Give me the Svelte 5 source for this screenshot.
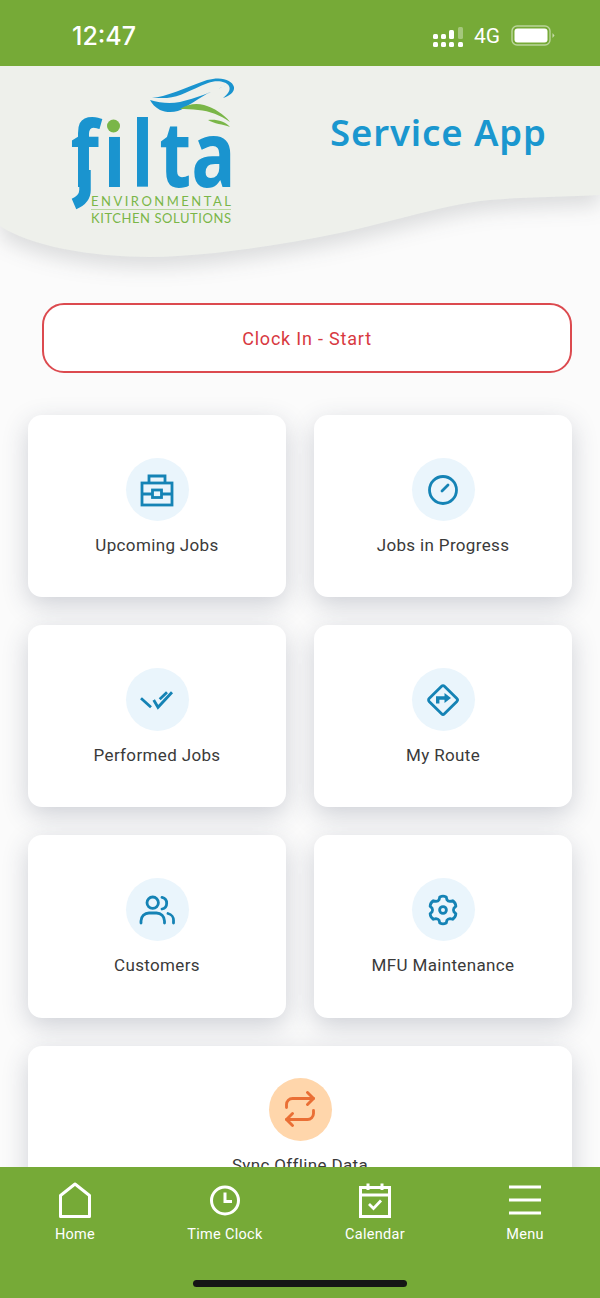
<script lang="ts">
  const tiles = [
    { label: 'Upcoming Jobs', icon: 'case' },
    { label: 'Jobs in Progress', icon: 'gauge' },
    { label: 'Performed Jobs', icon: 'checks' },
    { label: 'My Route', icon: 'route' },
    { label: 'Customers', icon: 'users' },
    { label: 'MFU Maintenance', icon: 'gear' }
  ];

  // six squarish teeth round the centre of a 32 box
  function gearPath() {
    const p = (r: number, t: number) =>
      `${(16 + r * Math.cos(t)).toFixed(2)} ${(16 + r * Math.sin(t)).toFixed(2)}`;
    let d = '';
    for (let i = 0; i < 6; i++) {
      const a = ((i * 60 - 90) * Math.PI) / 180;
      const b = a + Math.PI / 6;
      const next = a + Math.PI / 3;
      d += `${i === 0 ? 'M' : 'L'}${p(13.4, a - 0.24)} Q${p(14.6, a)} ${p(13.4, a + 0.24)} `;
      d += `L${p(11, b - 0.16)} Q${p(10, b)} ${p(11, b + 0.16)} L${p(13.4, next - 0.24)} `;
    }
    return d + 'Z';
  }
</script>

<div class="phone">
  <div class="status">
    <span class="time">12:47</span>
    <div class="status-right">
      <svg class="signal" width="32" height="22" viewBox="0 0 32 22" fill="#fff">
        <rect x="1" y="9" width="5" height="5" rx="1.5" />
        <rect x="9" y="9" width="5" height="5" rx="1.5" />
        <rect x="17" y="5" width="5" height="9" rx="1.5" />
        <rect x="26" y="2" width="5" height="12" rx="1.5" opacity="0.35" />
        <rect x="1" y="17" width="5" height="5" rx="1.5" />
        <rect x="9" y="17" width="5" height="5" rx="1.5" />
        <rect x="17" y="17" width="5" height="5" rx="1.5" />
        <rect x="26" y="17" width="5" height="5" rx="1.5" />
      </svg>
      <span class="net">4G</span>
      <svg class="battery" width="44" height="22" viewBox="0 0 44 22">
        <rect x="1" y="1" width="38" height="19" rx="5" fill="none" stroke="#fff" stroke-opacity="0.5" stroke-width="1.4" />
        <rect x="3.5" y="3.5" width="33" height="14" rx="3" fill="#fff" />
        <path d="M41.5 8l2 2.5-2 2.5z" fill="#fff" fill-opacity="0.6" />
      </svg>
    </div>
  </div>

  <header class="brand">
    <svg class="wave" viewBox="0 0 600 192" preserveAspectRatio="none">
      <path d="M0 0H600V129C560 131 520 131 490 134C440 139 380 160 320 171C260 182 200 191 150 191C90 191 30 180 0 160Z" />
    </svg>
    <svg class="logo" width="170" height="152" viewBox="66 76 170 152">
      <path d="M152 98C165 97 185 88 207 80C222 76 232 80 234 87C235 92 229 96 223 98C228 94 231 90 229 86C226 81 216 80 208 83C190 90 180 97 167 98Z" fill="#1a94cf" />
      <path d="M150 100C160 103 170 104 180 102C196 98 212 92 227 85C218 89 210 92 205 95C197 100 190 104 184 108C178 113 166 113 160 110C155 107 152 104 150 100Z" fill="#1a94cf" />
      <path d="M180 109C188 104 196 103 204 105C214 108 224 114 230 122C220 115 210 111 198 110C192 109 186 109 180 109Z" fill="#7ab648" />
      <path d="M208 120C216 119 225 121 230 127C223 124 214 124 208 120Z" fill="#7ab648" />
      <text class="filta" transform="scale(0.8 1)" y="187" x="88 129 164 199 239">fılta</text>
      <circle cx="113.5" cy="126" r="6.5" fill="#7ab648" />
      <path d="M85 170V190C85 197 81 201 74 204" fill="none" stroke="#1a94cf" stroke-width="11.5" />
      <text class="small" x="91" y="206" textLength="140">ENVIRONMENTAL</text>
      <line x1="91" x2="231" y1="209.5" y2="209.5" stroke="#b9d79c" />
      <text class="small" x="91" y="223" textLength="140">KITCHEN SOLUTIONS</text>
    </svg>
    <h1>Service App</h1>
  </header>

  <main>
    <button class="clock">Clock In - Start</button>
    <div class="grid">
      {#each tiles as tile}
        <div class="tile">
          <div class="disc">
            <svg width="36" height="36" viewBox="-2 -2 36 36" fill="none" stroke="#1583b5" stroke-width="2.8">
              {#if tile.icon === 'case'}
                <rect x="1" y="9" width="30" height="22" />
                <path d="M8 9V2H24V9M1 20H11M21 20H31" />
                <rect x="11.5" y="16" width="9" height="7.5" />
              {:else if tile.icon === 'gauge'}
                <circle cx="16" cy="16" r="13.5" />
                <path d="M15 17L21 11" stroke-linecap="round" />
              {:else if tile.icon === 'checks'}
                <path d="M0 14.3L10 23.3M12.7 16L17 23.3L31 8.3M18.7 15.3L26 8.3" />
              {:else if tile.icon === 'route'}
                <rect x="5.2" y="5.2" width="21.6" height="21.6" rx="2" transform="rotate(45 16 16)" />
                <path d="M10.7 19.5V14H21" stroke-width="3.4" />
                <path d="M17.5 9L24 14L17.5 19Z" fill="#1583b5" stroke="none" />
              {:else if tile.icon === 'users'}
                <circle cx="11.7" cy="8.7" r="5.7" />
                <path d="M0 29V27A8 8 0 0 1 8 19H15.5A8 8 0 0 1 23.5 27V29" stroke-linecap="round" />
                <path d="M21 3.3A6 6 0 0 1 21 15M27 19.5A7 7 0 0 1 32.5 27V29" stroke-linecap="round" />
              {:else}
                <path d={gearPath()} stroke-linejoin="round" />
                <circle cx="16" cy="16" r="3.4" />
              {/if}
            </svg>
          </div>
          <span>{tile.label}</span>
        </div>
      {/each}
      <div class="tile wide">
        <div class="disc sync">
          <svg width="36" height="36" viewBox="0 0 24 24" fill="none" stroke="#ea6f35" stroke-width="1.9" stroke-linecap="round" stroke-linejoin="round">
            <path d="M17 1L21 5L17 9" />
            <path d="M3 11V9A4 4 0 0 1 7 5H21" />
            <path d="M7 23L3 19L7 15" />
            <path d="M21 13V15A4 4 0 0 1 17 19H3" />
          </svg>
        </div>
        <span>Sync Offline Data</span>
      </div>
    </div>
  </main>

  <nav>
    <div class="nav-item">
      <svg width="36" height="36" viewBox="0 0 36 36" fill="none" stroke="#fff" stroke-width="3">
        <path d="M3.5 34.5V13.5L18 2L32.5 13.5V34.5Z" stroke-linejoin="round" />
      </svg>
      <span>Home</span>
    </div>
    <div class="nav-item">
      <svg width="36" height="36" viewBox="0 0 36 36" fill="none" stroke="#fff" stroke-width="3">
        <circle cx="18" cy="18.5" r="13.5" />
        <path d="M18 10.5V19.5H25" />
      </svg>
      <span>Time Clock</span>
    </div>
    <div class="nav-item">
      <svg width="36" height="36" viewBox="0 0 36 36" fill="none" stroke="#fff" stroke-width="3">
        <rect x="3.5" y="5.5" width="29" height="29" />
        <path d="M3.5 13H32.5M11 1.5V8M25 1.5V8" />
        <path d="M12 22L16.5 26.5L24 18.5" stroke-width="2.8" />
      </svg>
      <span>Calendar</span>
    </div>
    <div class="nav-item">
      <svg width="36" height="36" viewBox="0 0 36 36" fill="none" stroke="#fff" stroke-width="3.2">
        <path d="M2 5H34M2 18H34M2 31H34" />
      </svg>
      <span>Menu</span>
    </div>
    <div class="home-bar"></div>
  </nav>
</div>

<style>
  :global(body) {
    margin: 0;
    background: #fbfbfb;
  }

  .phone {
    display: flex;
    flex-direction: column;
    width: 600px;
    height: 1298px;
    overflow: hidden;
    background: #fbfbfb;
    font-family: Roboto, 'Liberation Sans', sans-serif;
  }

  .status {
    display: flex;
    align-items: center;
    justify-content: space-between;
    flex: 0 0 66px;
    padding: 6px 45px 0 72px;
    box-sizing: border-box;
    background: #76aa37;
    color: #fff;
    position: relative;
    z-index: 2;
  }

  .time {
    font-family: Inter, sans-serif;
    font-size: 25px;
    font-weight: 500;
  }

  .status-right {
    display: flex;
    align-items: center;
    gap: 10px;
  }

  .net {
    font-size: 21px;
    margin-right: 1px;
  }

  .brand {
    position: relative;
    display: flex;
    flex: 0 0 192px;
    padding: 10px 0 0 66px;
    box-sizing: border-box;
  }

  .wave {
    position: absolute;
    inset: 0;
    width: 100%;
    height: 100%;
    overflow: visible;
    filter: drop-shadow(0 10px 10px rgba(40, 45, 55, 0.15));
  }

  .wave path {
    fill: #eef0eb;
  }

  .logo {
    position: relative;
    flex: none;
  }

  .filta {
    font-family: 'Open Sans', sans-serif;
    font-size: 92px;
    font-weight: 700;
    fill: #1a94cf;
  }

  .small {
    font-family: Lato, sans-serif;
    font-size: 13px;
    fill: #7ab648;
  }

  h1 {
    position: relative;
    margin: 33px 0 0 94px;
    font-family: 'Noto Sans', sans-serif;
    font-size: 36.5px;
    font-weight: 600;
    letter-spacing: 0.9px;
    line-height: 46px;
    color: #1a97cf;
    white-space: nowrap;
  }

  main {
    flex: 1;
    min-height: 0;
    overflow: hidden;
    padding: 45px 28px 0;
  }

  .clock {
    display: block;
    width: 530px;
    height: 70px;
    margin: 0 0 42px 14px;
    background: #fff;
    border: 2px solid #dc4a4f;
    border-radius: 22px;
    color: #d8393f;
    font-family: Roboto, sans-serif;
    font-size: 18px;
    letter-spacing: 0.8px;
  }

  .grid {
    display: grid;
    grid-template-columns: 258px 258px;
    gap: 28px;
  }

  .tile {
    display: flex;
    flex-direction: column;
    align-items: center;
    height: 182.2px;
    padding-top: 43px;
    box-sizing: border-box;
    background: #fff;
    border-radius: 14px;
    box-shadow: 0 8px 26px rgba(50, 60, 85, 0.22);
    color: #3a3a3a;
    font-size: 17px;
    letter-spacing: 0.35px;
  }

  .tile span {
    margin-top: 14px;
    line-height: 20px;
  }

  .wide {
    grid-column: 1 / 3;
    padding-top: 32px;
  }

  .disc {
    display: flex;
    align-items: center;
    justify-content: center;
    width: 63px;
    height: 63px;
    border-radius: 50%;
    background: #eaf5fc;
  }

  .disc.sync {
    background: #ffd6ab;
  }

  nav {
    position: relative;
    display: grid;
    grid-template-columns: repeat(4, 150px);
    flex: 0 0 131px;
    padding-top: 15px;
    box-sizing: border-box;
    background: #76aa37;
    color: #fff;
    font-size: 14.5px;
    letter-spacing: 0.3px;
    z-index: 2;
  }

  .nav-item {
    display: flex;
    flex-direction: column;
    align-items: center;
    gap: 8px;
  }

  .home-bar {
    position: absolute;
    left: 193px;
    bottom: 11px;
    width: 214px;
    height: 7px;
    border-radius: 4px;
    background: #151515;
  }
</style>
